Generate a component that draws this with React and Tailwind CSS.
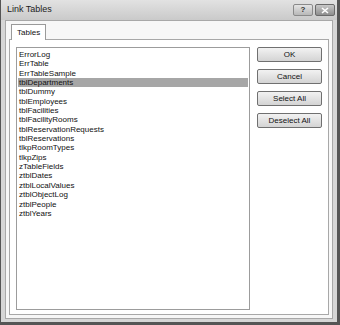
const tables = [
  "ErrorLog",
  "ErrTable",
  "ErrTableSample",
  "tblDepartments",
  "tblDummy",
  "tblEmployees",
  "tblFacilities",
  "tblFacilityRooms",
  "tblReservationRequests",
  "tblReservations",
  "tlkpRoomTypes",
  "tlkpZips",
  "zTableFields",
  "ztblDates",
  "ztblLocalValues",
  "ztblObjectLog",
  "ztblPeople",
  "ztblYears",
];

const DialogButton = ({ children }) => (
  <button className="w-[65px] h-[15px] rounded-[2px] border border-[#707070] bg-gradient-to-b from-[#f2f2f2] to-[#d4d4d4] text-[8px] leading-none text-[#111]">
    {children}
  </button>
);

export default function App() {
  return (
    <div
      className="w-[340px] h-[325px] bg-[#555] pr-[3px] pb-[3px] pl-[1px] flex flex-col"
      style={{ fontFamily: "'Liberation Sans', Arial, sans-serif" }}
    >
      <div className="flex-1 flex flex-col bg-[#d6d6d6]">
        <div className="h-[20px] flex items-center justify-between pl-[6px] pr-[2px] bg-gradient-to-b from-[#e2e2e2] to-[#cacaca]">
          <span className="text-[9px] text-[#222]">Link Tables</span>
          <div className="flex gap-[2px] items-center">
            <div className="w-[20px] h-[12px] rounded-[2px] border border-[#8a8a8a] bg-gradient-to-b from-[#e4e4e4] to-[#b8b8b8] flex items-center justify-center text-[8px] font-bold text-[#333] leading-none">
              ?
            </div>
            <div className="w-[20px] h-[12px] rounded-[2px] border border-[#6a6a6a] bg-gradient-to-b from-[#c8c8c8] to-[#8e8e8e] flex items-center justify-center">
              <svg width="8" height="7" viewBox="0 0 8 7">
                <path d="M1 1 L7 6 M7 1 L1 6" stroke="#fff" strokeWidth="1.6" />
              </svg>
            </div>
          </div>
        </div>
        <div className="flex-1 mx-[4px] mb-[3px] bg-[#f7f7f7] border border-[#a8a8a8] flex flex-col px-[3px] pt-[2px] pb-[3px]">
          <div className="flex">
            <div className="ml-[2px] h-[16px] px-[5px] flex items-center border border-b-0 border-[#9a9a9a] bg-white text-[8px] text-[#111] relative top-[1px]">
              Tables
            </div>
          </div>
          <div className="flex-1 bg-white border border-[#a8a8a8] flex gap-[7px] px-[6px] pt-[7px] pb-[4px]">
            <div className="w-[237px] border border-[#9c9c9c] pt-[2px] pl-[1px] pr-[1px]">
              {tables.map((t) => (
                <div
                  key={t}
                  className={`h-[9.35px] leading-[9.35px] text-[8px] pl-[1px] text-[#111] ${
                    t === "tblDepartments" ? "bg-[#a6a6a6]" : ""
                  }`}
                >
                  {t}
                </div>
              ))}
            </div>
            <div className="flex flex-col gap-[7px]">
              <DialogButton>OK</DialogButton>
              <DialogButton>Cancel</DialogButton>
              <DialogButton>Select All</DialogButton>
              <DialogButton>Deselect All</DialogButton>
            </div>
          </div>
        </div>
      </div>
    </div>
  );
}
